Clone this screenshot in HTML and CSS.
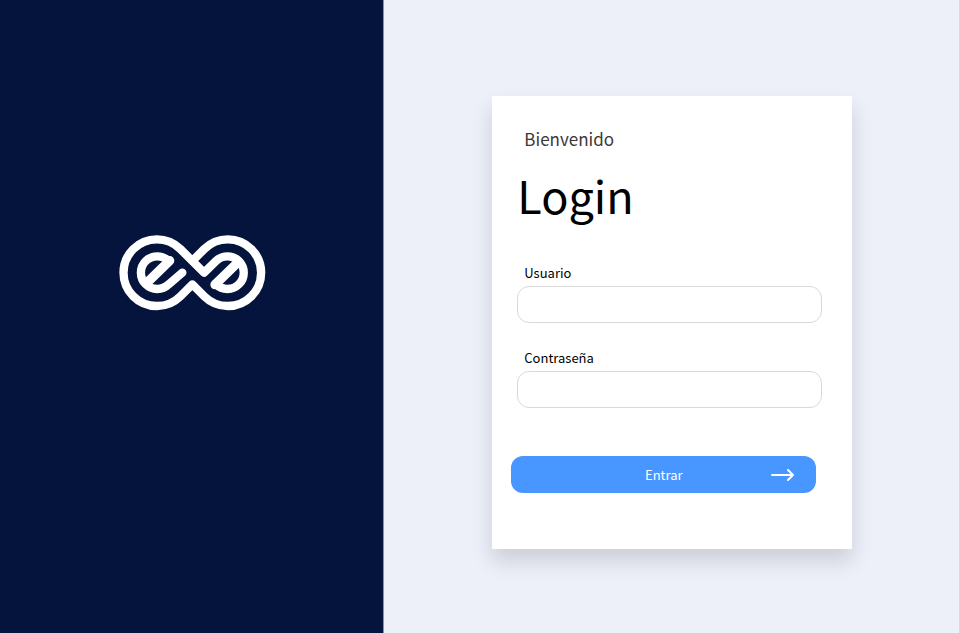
FILE: index.html
```html
<!DOCTYPE html>
<html lang="es">
<head>
<meta charset="utf-8">
<title>Login</title>
<link rel="stylesheet" href="styles.css">
</head>
<body>
<div class="page">
  <aside class="brand">
    <svg class="logo" viewBox="0 0 480 270" fill="none" stroke="#fff" stroke-width="25" stroke-linejoin="round" role="img" aria-label="Logo">
      <path d="M246 94 L277 63 A100 100 0 1 1 277 205 L241 169 L205 205 A100 100 0 1 1 205 63 L276 134 L312 99 A49 49 0 1 1 312 169"/>
      <path stroke-linecap="round" d="M170 99 A49 49 0 1 0 170 169 L211 134"/>
      <path stroke-linecap="round" stroke-width="28" d="M103 166 L173 98 M379 102 L309 170"/>
    </svg>
  </aside>
  <main class="content">
    <form class="card">
      <p class="welcome">Bienvenido</p>
      <h1 class="title">Login</h1>
      <div class="field">
        <label for="user">Usuario</label>
        <input id="user" type="text">
      </div>
      <div class="field">
        <label for="password">Contraseña</label>
        <input id="password" type="password">
      </div>
      <button class="submit" type="submit">
        <span>Entrar</span>
        <svg class="arrow" viewBox="0 0 24 14" fill="none" stroke="#fff" stroke-width="2" stroke-linecap="round" stroke-linejoin="round" aria-hidden="true">
          <path d="M1 7 H22 M17 2 L22 7 L17 12"/>
        </svg>
      </button>
    </form>
  </main>
</div>
</body>
</html>
```
FILE: styles.css
```css
* {
  box-sizing: border-box;
}

body {
  margin: 0;
  font-family: "Noto Sans CJK SC", "Noto Sans", sans-serif;
  color: #000;
}

.page {
  display: grid;
  grid-template-columns: 2fr 3fr;
  min-height: 100vh;
  background: #edf0f9;
  border-right: 1px solid #d5d9e8;
}

.brand {
  display: flex;
  justify-content: center;
  align-items: center;
  padding-bottom: 87px;
  padding-left: 1px;
  background: #04143d;
  border-right: 1px solid #8890ae;
}

.logo {
  width: 160px;
}

.content {
  display: flex;
  justify-content: center;
  align-items: center;
  padding-top: 12px;
  padding-left: 2px;
}

.card {
  width: 360px;
  padding: 30px 30px 56px 25px;
  background: #fff;
  box-shadow: 0 12px 20px rgba(0, 0, 0, 0.14);
}

.welcome {
  margin: 0 7px;
  font-size: 17px;
  line-height: 26px;
  color: #3c3838;
}

.title {
  margin: 8px 0 32px;
  font-size: 45px;
  font-weight: 400;
  line-height: 70px;
}

.field {
  margin-bottom: 24px;
}

.field label {
  display: block;
  padding: 0 7px 2px;
  font-size: 13px;
  line-height: 22px;
}

.field input {
  display: block;
  width: 100%;
  height: 37px;
  padding: 0 12px;
  font: inherit;
  background: #fff;
  border: 1px solid #d9d9d9;
  border-radius: 12px;
}

.submit {
  display: grid;
  grid-template-columns: 1fr auto 1fr;
  align-items: center;
  width: 100%;
  height: 37px;
  margin: 48px 0 0 -6px;
  padding: 0 21px;
  font-family: inherit;
  font-size: 13px;
  color: #fff;
  background: #4896ff;
  border: 0;
  border-radius: 12px;
}

.submit span {
  grid-column: 2;
}

.arrow {
  width: 24px;
  justify-self: end;
}
```
